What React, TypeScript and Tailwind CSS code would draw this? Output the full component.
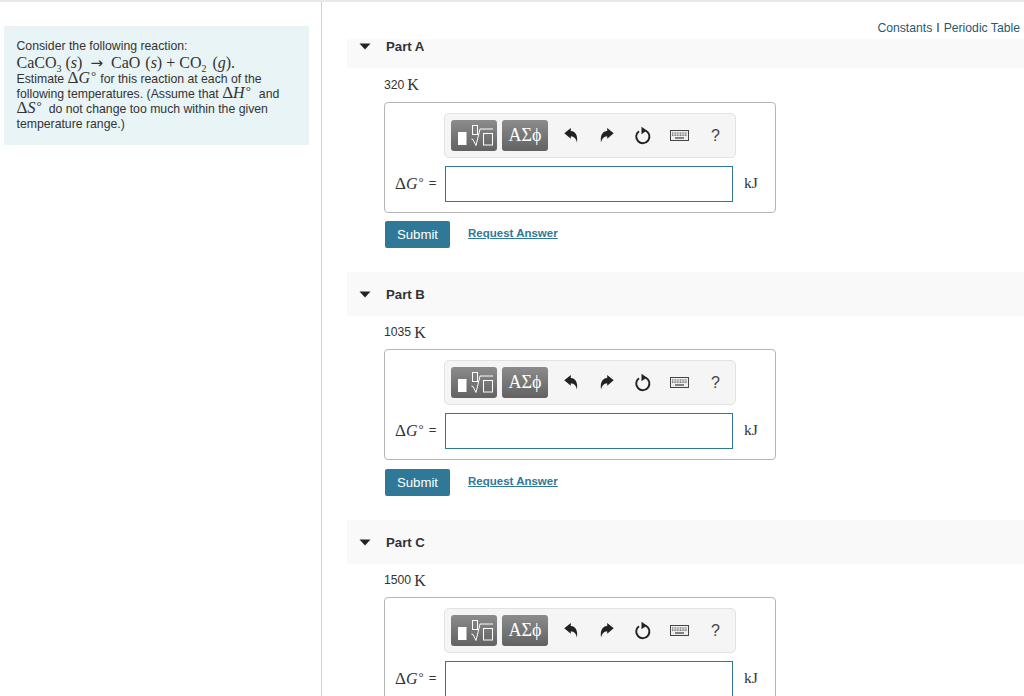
const serif = "font-['Liberation_Serif',serif]";

function Triangle() {
  return (
    <svg width="12" height="7" viewBox="0 0 12 7" className="block">
      <path d="M0.5 0.5H11.5L6 6.5Z" fill="#222" />
    </svg>
  );
}

function Templates() {
  return (
    <div className="w-[46px] h-[31px] rounded-[3px] bg-gradient-to-b from-[#8c8c8c] to-[#626262]">
      <svg width="46" height="31" viewBox="0 0 46 31" className="block">
        <rect x="7" y="12" width="8.5" height="13" fill="#fff" />
        <rect x="21.5" y="5.5" width="5" height="9" fill="none" stroke="#fff" strokeWidth="1" />
        <path d="M20.5 19l1.5 0.5 3 6 4-16.5h13" fill="none" stroke="#fff" strokeWidth="1" />
        <rect x="32.5" y="13.5" width="9" height="11.5" fill="none" stroke="#fff" strokeWidth="1" />
      </svg>
    </div>
  );
}

function Toolbar() {
  return (
    <div className="ml-[59px] w-[292px] h-[45px] rounded-[5px] border border-[#e2e2e2] bg-[#f5f5f5] flex items-center pl-[6px]">
      <Templates />
      <div className={`ml-[5px] w-[46px] h-[31px] rounded-[3px] bg-gradient-to-b from-[#8c8c8c] to-[#626262] flex items-center justify-center text-white text-[18px] ${serif}`}>
        ΑΣϕ
      </div>
      <svg width="14" height="15" viewBox="0 0 14 15" className="ml-[16px]">
        <path d="M0.3 5.2L6.8 0V3C11.2 3.2 14 7 13 14.5C12.2 10.8 10.2 8.6 6.8 8.3V10.8Z" fill="#222" />
      </svg>
      <svg width="14" height="15" viewBox="0 0 14 15" className="ml-[22px]">
        <path d="M13.7 5.2L7.2 0V3C2.8 3.2 0 7 1 14.5C1.8 10.8 3.8 8.6 7.2 8.3V10.8Z" fill="#222" />
      </svg>
      <svg width="18" height="20" viewBox="0 0 18 20" className="ml-[20px]">
        <path d="M5 5.2A6.6 6.6 0 1 0 11.6 4.6" fill="none" stroke="#222" strokeWidth="1.9" />
        <path d="M7.5 0.8L12.8 4.6L7.5 8.2Z" fill="#222" />
      </svg>
      <svg width="19" height="11" viewBox="0 0 19 11" className="ml-[18px]">
        <rect x="0.5" y="0.5" width="18" height="10" fill="#eee" stroke="#444" />
        <path d="M2 3h15M2 5.2h15" stroke="#555" strokeWidth="1.2" strokeDasharray="1 0.6" />
        <path d="M5 8h9" stroke="#555" strokeWidth="1.4" />
      </svg>
      <span className="ml-[22px] text-[16px] text-[#444] font-['Liberation_Sans',sans-serif]">?</span>
    </div>
  );
}

function Quantity({ letter }: { letter: string }) {
  return (
    <span className={`${serif} text-[16px] leading-none text-[#333] whitespace-nowrap`}>
      <span className="text-[17px]">Δ</span>
      <i>{letter}</i>
      <span className="text-[13px] ml-[1px] align-[3px]">°</span>
    </span>
  );
}

function Part({ name, temp, first }: { name: string; temp: string; first?: boolean }) {
  return (
    <section className={first ? "" : "mt-[24px]"}>
      <div className={`bg-[#f9f9f9] flex pl-[12px] ${first ? "h-[29px]" : "h-[44px] items-center"}`}>
        <div className={first ? "mt-[4px]" : ""}>
          <Triangle />
        </div>
        <span className="ml-[15px] text-[13.2px] leading-[15px] font-bold text-[#333]">{name}</span>
      </div>
      <div className={`pl-[37px] flex items-center text-[12.2px] text-[#333] ${first ? "h-[34px]" : "h-[33px]"}`}>
        {temp.split(" ")[0]}
        <span className={`${serif} text-[16px] ml-[3px]`}>{temp.split(" ")[1]}</span>
      </div>
      <div className="ml-[37px] w-[392px] h-[111px] rounded-[4px] border border-[#b5b5b5] pt-[10px]">
        <Toolbar />
        <div className="mt-[8px] flex items-center h-[36px]">
          <div className="w-[60px] pl-[10px] -mt-[2px] flex items-center">
            <Quantity letter="G" />
            <span className="ml-[5px] text-[13px] text-[#333]">=</span>
          </div>
          <div className="w-[288px] h-[36px] border border-[#2f7898] bg-white" />
          <span className={`ml-[11px] ${serif} text-[15.5px] leading-none -mt-[2px] text-[#333]`}>kJ</span>
        </div>
      </div>
      <div className={`ml-[38px] flex items-center ${first ? "mt-[8px]" : "mt-[9px]"}`}>
        <button className="w-[65px] h-[27px] rounded-[2px] bg-[#2f7898] text-white text-[13.2px]">Submit</button>
        <a className="ml-[18px] -mt-[1px] text-[11.5px] font-bold text-[#2f7898] underline">Request Answer</a>
      </div>
    </section>
  );
}

export default function App() {
  return (
    <div className="w-[1024px] h-[696px] overflow-hidden bg-white font-['Liberation_Sans',sans-serif] border-t-2 border-[#e8e8e8] box-border flex">
      <aside className="w-[322px] shrink-0 border-r border-[#cfcfcf] pl-[4px] pt-[24px]">
        <div className="w-[305px] h-[119px] bg-[#e9f4f6] border-t border-[#eef0f0] pl-[12.5px] pt-[12px] text-[12.25px] leading-[15.6px] text-[#333]">
          <div className="h-[15.6px]">Consider the following reaction:</div>
          <div className={`${serif} h-[15.6px] text-[16px] leading-[15.6px]`}>
            CaCO<sub className="text-[10px] align-[-2px] leading-none">3</sub>
            <span className="ml-[4px]">(<i>s</i>)</span>
            <span className="ml-[8px] font-['DejaVu_Sans',sans-serif] text-[15px]">→</span>
            <span className="ml-[8px]">CaO</span>
            <span className="ml-[5px]">(<i>s</i>)</span>
            <span className="ml-[4px]">+</span>
            <span className="ml-[4px]">CO</span>
            <sub className="text-[10px] align-[-2px] leading-none">2</sub>
            <span className="ml-[6px]">(<i>g</i>).</span>
          </div>
          <div className="h-[15.6px] -mt-[1px] leading-[13px]">
            Estimate <Quantity letter="G" />
            <span className="ml-[4px]">for this reaction at each of the</span>
          </div>
          <div className="h-[15.6px] -mt-[1px] leading-[12px]">
            following temperatures. (Assume that <Quantity letter="H" />
            <span className="ml-[8px]">and</span>
          </div>
          <div className="h-[15.6px] leading-[12px]">
            <Quantity letter="S" />
            <span className="ml-[7px]">do not change too much within the given</span>
          </div>
          <div className="h-[15.6px] mt-[2px]">temperature range.)</div>
        </div>
      </aside>
      <main className="flex-1 min-w-0 pl-[25px]">
        <div className="h-[37px] flex justify-end items-end pr-[4px] pb-[2px] text-[12.2px] text-[#1f5a73]">
          <a>Constants</a>
          <span className="mx-[4px] text-[#333]">I</span>
          <a>Periodic Table</a>
        </div>
        <Part name="Part A" temp="320 K" first />
        <Part name="Part B" temp="1035 K" />
        <Part name="Part C" temp="1500 K" />
      </main>
    </div>
  );
}
